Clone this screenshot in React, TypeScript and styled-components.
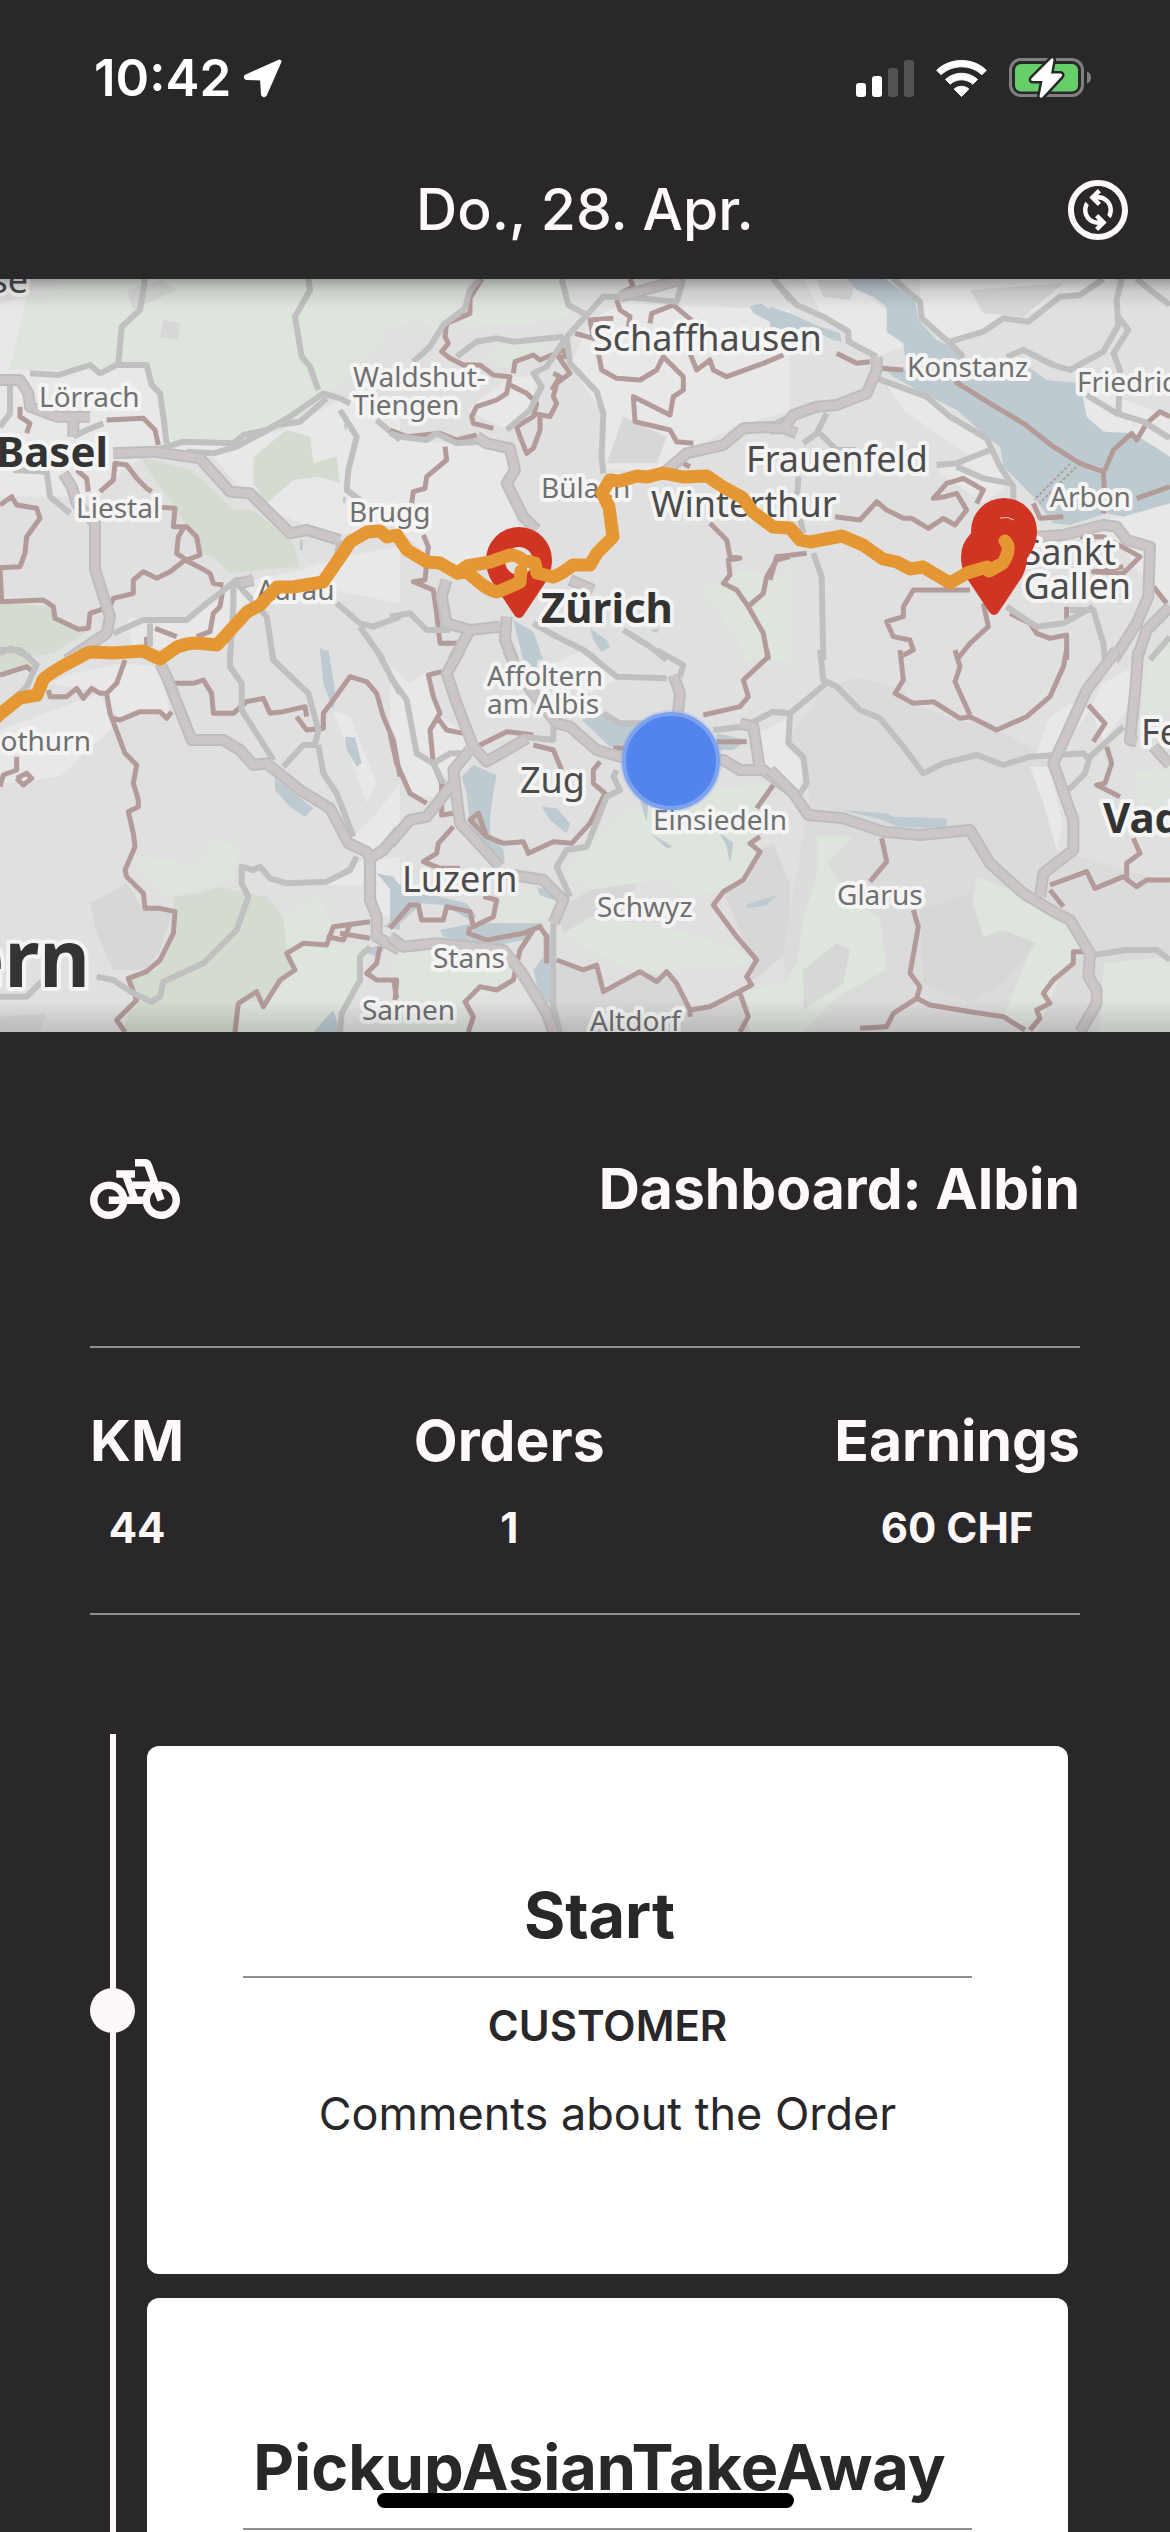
import React from "react";
import styled, { createGlobalStyle } from "styled-components";
import { MdOutlineChangeCircle, MdPedalBike } from "react-icons/md";

const color = {
  ink: "#29272a",
  paper: "#fff8f8",
  card: "#ffffff",
  rule: "#8f8f90",
  route: "#e49733",
  pin: "#d03423",
};

const GlobalStyle = createGlobalStyle`
  * { box-sizing: border-box; }
  body {
    margin: 0;
    background: ${color.ink};
    color: ${color.paper};
    font-family: Inter, Roboto, "Liberation Sans", sans-serif;
  }
  h1, h2, h3, p, dl, dt, dd, ol { margin: 0; padding: 0; }
`;

const Shell = styled.div`
  position: relative;
  display: flex;
  flex-direction: column;
  height: 100vh;
  overflow: hidden;
`;

const StatusBar = styled.div`
  display: flex;
  flex: none;
  align-items: center;
  justify-content: space-between;
  height: 141px;
  padding: 14px 78px 0 94px;
  color: #ffffff;
`;

const Clock = styled.div`
  display: flex;
  align-items: center;
  gap: 12px;
  font-size: 51px;
  line-height: 60px;
  font-weight: 600;
`;

const StatusIcons = styled.div`
  display: flex;
  align-items: center;
  gap: 22px;
`;

const Glyph = styled.svg`
  display: block;
  flex: none;
`;

const Header = styled.header`
  display: grid;
  flex: none;
  grid-template-columns: 72px 1fr 72px;
  align-items: center;
  height: 138px;
  padding: 0 36px;
`;

const PageTitle = styled.h1`
  grid-column: 2;
  text-align: center;
  font-size: 57px;
  line-height: 72px;
  font-weight: 500;
`;

const IconButton = styled.button`
  display: block;
  padding: 0;
  border: 0;
  background: none;
  color: ${color.paper};
  font-size: 72px;
  line-height: 0;
`;

const Scroll = styled.main`
  flex: 1;
  min-height: 0;
  overflow-y: auto;
  scrollbar-width: none;
`;

const MapFrame = styled.section`
  width: 100%;
  aspect-ratio: 1170 / 753;
  overflow: hidden;
`;

const MapDrawing = styled.svg`
  display: block;
  width: 100%;
  height: 100%;
`;

const Content = styled.div`
  padding: 0 90px;
`;

const DashboardHead = styled.div`
  display: flex;
  align-items: center;
  justify-content: space-between;
  height: 316px;
  border-bottom: 2px solid ${color.rule};
  font-size: 90px;
  line-height: 0;
`;

const DashboardTitle = styled.h2`
  font-size: 57px;
  line-height: 78px;
  font-weight: 700;
`;

const Stats = styled.dl`
  display: flex;
  justify-content: space-between;
  padding: 54px 0 55px;
  border-bottom: 2px solid ${color.rule};
  text-align: center;
`;

const StatName = styled.dt`
  font-size: 57px;
  line-height: 78px;
  font-weight: 700;
`;

const StatValue = styled.dd`
  margin-top: 18px;
  font-size: 42px;
  line-height: 60px;
  font-weight: 700;
`;

const Timeline = styled.ol`
  margin-top: 119px;
  list-style: none;
`;

const Stop = styled.li`
  display: grid;
  grid-template-columns: 45px 1fr;
  column-gap: 12px;
`;

const Track = styled.div`
  display: flex;
  align-items: center;
  justify-content: center;
  background: linear-gradient(${color.paper}, ${color.paper}) center / 6px 100% no-repeat;
`;

const Dot = styled.span`
  width: 45px;
  height: 45px;
  border-radius: 50%;
  background: ${color.paper};
`;

const Card = styled.article`
  min-height: 528px;
  margin: 12px;
  margin-left: 0;
  padding: 130px 96px;
  border-radius: 12px;
  background: ${color.card};
  color: ${color.ink};
  text-align: center;
`;

const CardTitle = styled.h3`
  padding: 0 16px 22px 0;
  font-size: 63px;
  line-height: 78px;
  font-weight: 700;
  white-space: nowrap;
`;

const CardRole = styled.p`
  padding: 18px 0 28px;
  border-top: 2px solid ${color.rule};
  font-size: 42px;
  line-height: 60px;
  font-weight: 600;
`;

const CardNote = styled.p`
  font-size: 45px;
  line-height: 60px;
`;

const HomeIndicator = styled.div`
  position: absolute;
  left: 50%;
  bottom: 24px;
  width: 417px;
  height: 15px;
  margin-left: -208px;
  border-radius: 8px;
  background: #000000;
`;

/* ---------- Map ---------- */

type Tile = {
  x: number;
  y: number;
  base?: string;
  light: string;
  meadow: string;
  forest: string;
  dark: string;
  water: string;
  border: string;
  road: string;
  motorway: string;
};

/* Each tile is drawn at three units per map pixel. */
const tiles: Tile[] = [
  {
    x: 0,
    y: 270,
    light:
      "M0 100 80 80 30 300 440 290 520 520 720 510 850 480 1040 380 1200 450V760L1000 800 760 700 640 560 500 570 430 560 370 600 300 680 0 680Z M380 1040 560 1060 710 940 900 900 1020 860 1200 830V1000L1000 960 740 1000 640 1110 400 1150Z",
    meadow: "M130 100 200 27H1200V100L1130 240 990 360 930 420 790 470 700 510 520 510 490 440 480 370 440 285 340 290 180 300 30 300 60 200 80 80Z",
    forest:
      "M420 560 500 580 570 600 640 660 700 720 760 720 880 820 900 890 780 900 690 910 640 860 600 850 520 700 470 640Z M760 560 860 480 930 500 940 580 1010 560 1020 640 960 620 880 630 800 700 760 640Z M0 1000 150 1010 180 1060 260 1085 220 1110 160 1150 0 1170Z",
    dark: "M490 150 540 160 535 210 480 200Z M380 60 480 30 530 60 400 120Z",
    water: "M960 1130 990 1160 990 1170 965 1170Z M900 810 908 810 908 840 900 840Z M1030 680 1038 680 1036 700 1028 700Z M1030 460 1042 470 1036 482Z",
    border:
      "M0 705 35 680 50 705 110 715 120 745 80 800 75 850 60 890 0 893 5 995 130 990 160 1010 165 1045 235 1078 265 1075 270 1030 330 1010 340 985 400 970 400 930 430 905 470 925 510 905 555 870 595 890 630 910 640 940 670 945 M480 712 525 715 520 770 560 770 590 800 600 855 560 870 530 850 535 800 550 775 M230 600 260 625 265 665 M300 665 340 630 345 580 380 585 410 625 440 655 455 665 M320 450 430 445 465 480 475 525 M670 950 660 1010 640 1030 630 1085 590 1100 M465 1075 530 1100 M440 1130 440 1100 M60 410 60 440 90 460 80 490",
    road: "M435 27 420 120 365 170 355 285 M0 470 30 430 30 340 M90 310 175 315 270 285 300 310 350 285 440 285 455 345 480 370 490 440 500 520 M925 27 930 60 885 140 905 260 930 290 955 360 M470 540 550 515 700 520 730 495 800 480 870 440 970 370 1020 385 1050 400 M560 545 640 550 710 530 830 465 900 455 980 385 M1020 420 1070 500 1045 600 1040 660 1080 690 M40 600 140 605 150 680 210 730 M340 1090 430 1050 560 1050 620 1000 710 930 760 930 M700 940 700 1010 690 1170 M710 940 800 1040 820 1170 M450 1060 450 1130 M1010 1000 1080 1060 1120 1070 1200 1040 M1080 1070 1150 1170 M1020 810 1010 860 M0 1150 30 1135 90 1160 M1130 450 1200 510 M220 500 260 480 310 460",
    motorway:
      "M0 330 60 330 85 370 90 410 170 440 220 440 220 500 M220 440 270 440 M340 550 460 545 600 565 690 665 750 670 870 790 920 780 1020 810 M190 610 215 650 230 700 285 760 285 900 330 1040 320 1090 200 1170 M720 940 760 930",
  },
  {
    x: 390,
    y: 270,
    light:
      "M600 150 700 100 1200 120V420L1040 470 890 540 820 600 640 600 640 430 540 290Z M0 500 350 540 380 760 440 800 170 900 0 760Z M230 420 360 320 440 320 420 420 350 480Z",
    meadow:
      "M0 27H230L225 70 190 130 160 190 90 150 0 180Z M240 27H510L540 110 570 130 420 160 200 170 250 100Z M280 250 370 210 480 210 440 260 370 290 320 290Z M930 960 1060 900 1140 920 1200 900V1170H1060L1050 1110Z",
    forest: "",
    dark: "M700 440 830 500 800 580 650 580Z",
    water: "M1080 110 1110 100 1200 150V185L1090 130Z M370 1050 430 1085 460 1170H400Z M600 1075 650 1110 660 1130 635 1145 610 1110Z M780 1080 810 1075 800 1090Z",
    border:
      "M275 27 240 85 240 130 170 160 165 200 175 220 155 245 180 265 220 285 270 285 310 315 360 320 350 370 320 390 260 410 245 440 250 460 310 475 M370 310 375 275 430 255 450 270 520 240 530 260 505 260 540 310 500 340 490 380 500 400 480 440 430 430 M490 310 510 320 485 360 M360 345 410 370 440 400 430 440 380 470 390 500 410 550 430 535 450 480 450 440 M0 480 50 500 150 490 200 510 260 495 M165 530 170 570 110 620 105 655 70 665 65 700 M100 795 115 830 105 930 70 935 130 960 140 1030 150 1120 200 1120 M555 190 610 205 600 150 670 145 M625 250 635 300 680 325 750 330 800 300 820 260 880 320 880 360 850 380 840 435 740 385 730 380 735 455 840 480 860 515 910 520 M680 90 690 120 720 140 715 170 M720 27 730 50 700 65 M780 160 785 130 850 105 880 130 910 155 M900 250 920 300 960 270 970 300 1010 320 1120 280 1180 255 M960 760 1010 810 1020 860 1050 865 1015 870 1020 915 1000 940 1040 960 1075 1010 1120 1090 1135 1170 M1080 1005 1120 970 1130 920 1160 870 1200 860 M880 580 900 590",
    road: "M270 27 240 60 225 115 160 165 120 230 70 275 M200 260 260 215 320 205 370 215 520 200 M515 27 535 105 590 135 530 200 M590 135 640 80 700 80 860 95 880 27 M530 200 540 280 620 365 640 430 635 560 640 610 M530 200 470 290 430 310 455 350 420 420 350 480 M0 490 30 500 110 510 140 490 200 520 260 515 M0 1040 60 1030 110 1080 180 1080 M430 1060 500 1100 580 1140 620 1170 M700 1080 780 1130 830 1170 M1150 27 1200 90",
    motorway:
      "M260 500 290 520 360 535 375 600 350 640 400 740 440 780 M170 930 155 980 170 1060 240 1080 330 1070 M240 1080 190 1170 M350 1040 345 1110 370 1170 M820 610 890 550 1000 525 1060 475 1160 470 1200 450 M540 930 610 960 M690 80 780 55 870 30",
  },
  {
    x: 770,
    y: 270,
    light:
      "M100 27H240L310 90 350 120 400 230 320 260 160 140Z M450 27H1040L870 90 700 160 560 220 450 150Z M340 330 480 390 650 510 720 640 640 700 500 600 600 560 400 420Z M930 340 1200 440V560L1000 480 940 440Z M900 780 1200 700V1000L1100 900 1060 830Z",
    meadow: "M0 960 30 1000 50 1170H0Z M1150 1140 1200 1100V1170H1140Z",
    forest: "",
    dark: "M140 30H260L240 90 160 80Z M600 60 880 40 760 140 640 130Z",
    water:
      "M230 27H345L435 90 445 150 500 210 550 235 590 265 760 280 830 330 930 340 950 440 1000 485 1090 490 1200 560V700L1060 740 1010 730 900 765 850 760 790 680 740 630 700 590 690 530 650 500 560 420 480 380 370 320 330 285 410 300 400 220 350 185 350 110 310 80 260 60Z M0 110 60 130 150 170 210 190 215 215 190 210 130 180 0 175Z",
    border:
      "M200 250 260 280 300 275 M330 295 400 300 M555 335 660 400 760 460 850 530 930 580 1000 605 1005 690 1000 730 M1100 685 1200 650 M1005 600 1030 540 1085 490 1100 510 1130 460 1170 425 1200 440 M195 740 270 750 320 695 350 720 400 745 425 745 475 775 520 745 555 765 590 720 560 670 525 680 490 685 530 640 580 625 640 660 620 700 M790 700 810 745 880 740 M600 960 460 960 430 960 400 1010 400 1040 350 1055 370 1100 420 1110 430 1140 390 1160 M640 1000 655 1070 600 1120 560 1170 M720 1030 780 1060 800 1090 840 1105 890 1095 890 1170 M890 1010 890 1060 M0 930 20 860 110 850 M930 800 1000 800 1110 860 1060 910 970 905 1060 890 M1150 950 1190 1000",
    road: "M10 27 80 105 160 140 235 185 235 215 320 260 M370 27 450 95 455 145 540 220 580 260 M540 215 640 185 700 145 775 155 870 80 930 75 1000 27 M710 260 760 240 850 285 900 300 1000 245 1045 165 1040 90 1055 27 M1045 140 1075 180 1030 250 1050 300 1045 440 M950 375 1040 430 1120 455 1200 505 M320 325 470 380 540 440 650 505 690 590 730 650 730 690 M500 585 560 580 660 540 M560 590 640 625 720 640 M85 620 80 700 100 790 M130 850 155 920 160 1170 M170 430 140 490 100 520 M150 490 200 540 260 540 M900 1020 970 1020 1000 1120 1005 1170 M970 1010 880 1060 800 1070 710 1010 M1100 27 1140 60 1200 105 M1200 1100 1140 1170",
    motorway:
      "M0 475 40 475 70 435 140 410 200 405 290 370 320 300 320 260 M40 475 80 490 M800 800 880 795 1000 765 1040 770 1070 810 1140 830 1135 980 1100 1060 1030 1170 M1200 1010 1130 1080 1100 1170",
  },
  {
    x: 0,
    y: 650,
    light:
      "M150 100 220 70 370 40 480 50 510 190 350 200 320 130Z M0 240 300 130 340 230 180 380 0 400Z M1120 500 1200 400V540L1120 610 1060 560Z M1130 630 1200 620V800H1130Z M1000 180 1050 200 1130 400 1100 460Z M1000 690 1090 630V705H900Z",
    meadow: "M390 620 460 700 500 740 600 720 700 690 720 600 640 560 600 640Z M880 890 1110 880 1080 1000 1030 1080 1020 1146H710L720 1050 800 1060 870 960Z M850 790 960 740 1000 830 920 880 860 890Z",
    forest: "M520 740 600 730 660 710 740 730 800 740 850 800 860 900 880 960 800 1060 720 1050 710 1146H370L400 1040 380 990 470 960 520 840Z M0 0 80 0 100 50 0 70Z",
    dark: "M270 760 380 700 430 780 520 780 480 900 440 960 340 960 290 850Z M0 1100 140 1090 120 1146H0Z",
    water:
      "M960 0H985L1005 120 1000 180 970 100Z M1035 260 1065 262 1085 340 1070 350 1040 300Z M825 385 940 475 915 500 870 470 825 420Z M1130 670 1180 680 1200 710V840L1150 830 1190 800 1190 740Z M1080 900 1170 880 1130 920Z M940 1146 1000 1080 1020 1146Z",
    border:
      "M0 75 80 50 100 65 M145 120 150 140 200 140 230 115 250 145 275 115 300 130 320 130 350 100 375 30 M320 130 330 190 375 310 410 345 400 400 415 450 415 470 385 485 400 550 405 590 375 660 380 680 430 730 435 775 480 775 525 785 520 850 480 930 440 965 385 985 410 1050 350 1110 375 1146 M340 205 360 210 420 185 480 185 500 205 515 185 M525 100 580 100 610 90 635 130 640 190 700 190 740 155 790 145 810 190 850 185 915 170 920 200 M890 200 920 240 970 235 970 190 1000 150 1050 80 1100 95 1130 130 1150 200 1180 270 1200 380 M0 410 10 375 50 360 50 320 M50 385 80 370 95 385 70 405 50 385 M705 1146 715 1060 770 1025 790 1070 840 990 885 960 860 910 910 880 980 885 1000 830 1110 815 M980 860 1030 870 1050 825 M1020 850 1110 865 M1140 890 1130 940 1100 970 1130 990 1190 990 1185 1050",
    road: "M0 0 60 0 110 45 80 110 40 150 M690 0 690 50 725 100 725 180 820 330 M815 0 820 30 925 130 955 240 945 285 910 285 850 350 M955 285 970 370 1010 430 1060 560 M1130 0 1200 130 M1070 620 1050 660 980 695 860 700 810 685 780 650 760 660 725 650 725 700 745 740 710 840 610 940 490 995 480 1040 455 1055 400 1030 340 990 290 980 M0 1040 80 1040 125 995 M1110 890 1080 920 1080 990 1025 1090 1020 1146",
    motorway:
      "M480 40 500 80 575 270 670 270 720 300 760 345 800 340 900 420 990 475 1045 580 1100 605 1110 625 1110 750 1130 800 1130 860 1200 900 M1110 625 1150 600 1200 540",
  },
  {
    x: 390,
    y: 650,
    light: "M0 50 60 100 120 60 150 200 240 260 130 440 60 440 0 250Z M1110 250 1200 200V400L1120 350Z M450 60 580 0 680 90 600 130Z",
    meadow:
      "M590 600 700 480 780 480 980 420 1130 400 1140 480 1100 520 1110 600 1070 700 1000 720 900 740 840 690 740 700 600 720 520 660Z M350 700 500 730 480 800 340 840 320 760Z M0 900 130 890 360 920 370 1000 220 1060 240 1146H0Z M520 850 620 800 900 850 1050 900 1090 930 980 960 850 960 800 990 640 920Z M1060 1020 1200 1000V1146H1080Z",
    forest: "",
    dark: "M1000 720 1070 700 1110 600 1150 580 1200 700V900L1080 1000 1090 930 1050 850Z M500 940 620 950 640 1030 750 970 850 980 900 1080 1050 1030 1080 1146H500Z M500 780 600 720 740 700 700 780 600 800 520 850Z",
    water:
      "M215 380 250 345 320 375 310 430 300 500 300 550 340 600 345 640 290 590 240 530 230 430Z M455 470 500 475 540 520 530 550 480 510Z M400 0H445L440 60 405 30Z M575 210 640 190 740 230 720 290 660 290Z M0 680 50 720 150 740 230 760 260 800 240 810 160 765 95 760 20 830 0 840Z M150 840 250 820 460 820 400 870 300 890 160 860Z M460 850 480 850 490 1000 490 1070 450 1040 430 960 460 920Z M750 450 775 460 770 515Z M780 550 850 590 830 595Z M990 550 1030 580 1020 640 1010 590Z M1065 765 1160 735 1130 765 1080 775Z M440 710 500 730 490 750 450 735Z M980 250 1070 270 1030 300 980 300Z",
    border:
      "M155 65 115 75 130 140 150 190 120 240 130 340 155 400 155 495 190 490 M140 200 170 240 220 250 M0 250 20 340 60 430 110 460 M260 290 350 245 430 255 M430 285 490 300 515 360 M630 335 610 360 610 400 645 430 620 480 600 520 545 580 490 575 415 610 400 575 340 580 290 560 265 490 240 510 290 560 M190 530 145 580 140 610 100 635 150 655 210 655 M280 740 320 750 310 800 250 830 240 785 170 770 160 810 95 810 85 765 60 765 0 835 M240 830 235 850 290 870 400 850 450 830 470 860 470 940 M430 840 390 900 370 990 320 1020 270 1010 225 1055 250 1100 235 1146 M500 930 580 960 620 945 640 1025 750 965 800 995 830 965 860 1000 900 1080 960 1070 1085 1005 1070 980 1100 930 1040 860 970 765 1000 725 1060 690 1110 605 1080 580 1110 560 M1100 475 1150 405 M1130 0 1135 20 1060 90 1075 140 1050 170 940 195 M980 275 1070 275 M670 295 720 295 M1050 1030 1075 1100 1050 1146 M900 1100 900 1080 M10 985 20 1045",
    road: "M0 80 50 150 80 310 130 340 180 310 240 310 M580 0 680 80 830 85 M800 0 880 45 870 80 M640 190 690 220 830 220 M970 240 1060 230 1150 185 1200 190 M680 360 670 380 690 420 650 440 590 590 530 600 500 650 540 740 M490 820 490 1070 510 1146 M400 260 490 270 490 230 M130 340 160 400",
    motorway:
      "M210 0 170 70 200 160 250 290 290 335 410 265 M240 300 190 360 210 520 330 650 M190 400 110 500 60 510 0 580 M0 860 40 890 140 880 340 900 390 960 470 1090 490 1146 M355 0 380 60 430 130 500 220 540 230 620 300 690 320 830 330 1000 330 1050 360 1120 360 1200 420 M850 75 870 130 860 220 M1050 220 1090 230 1110 360 M340 670 460 690 520 750 490 820",
  },
  {
    x: 770,
    y: 650,
    base: "M260 80 400 120 420 160 560 210 680 240 840 320 860 600 1200 700V1146H60L40 900 100 560 120 440 60 260 160 120Z",
    light: "M0 230 60 300 100 340 90 420 0 360Z M800 310 840 200 900 160 960 180 850 330Z M1000 100 1090 50 1070 180 1000 270 960 180Z M780 350H840L860 450 880 520 860 600 820 460Z",
    meadow:
      "M140 560 250 560 170 640 250 760 330 800 350 960 200 1040 100 1146H0L20 1040 80 940 100 800 140 680Z M620 680 720 720 800 760 920 850 940 900 880 960 800 1146 700 1100 790 880 640 860 600 800Z M1100 370 1200 350V460H1100Z M1000 940 1200 920V1146H990Z M1140 0H1200V180L1110 230Z",
    forest: "",
    dark: "M450 780 600 730 640 860 700 840 800 880 700 1000 600 1060 460 1000Z M100 960 200 880 240 900 220 1000 100 1080Z",
    water: "M215 480 350 490 370 500 530 505V535L380 530 340 510Z",
    border:
      "M390 0 400 90 375 130 430 160 490 155 570 205 600 200 680 240 770 200 840 140 880 50 890 0 M555 0 570 50 555 95 600 195 M955 165 1005 220 970 275 M1010 290 1025 340 1005 400 980 405 1050 440 M1090 565 1110 610 1070 640 1070 685 M840 705 950 665 975 715 1060 680 1100 710 1130 690 1200 690 M840 720 880 770 M335 565 350 635 300 695 M430 780 445 830 420 970 450 1010 440 1045 370 1090 350 1130 270 1135 M440 1045 480 1065 600 1085 700 1100 765 1140 M780 1140 810 1105 800 1080 840 1060 820 1030 850 990 910 940 910 905 950 905",
    road: "M150 0 160 90 200 110 270 180 330 205 400 290 460 370 520 340 620 315 700 345 780 320 940 310 960 330 M175 95 60 190 0 185 M60 190 55 280 100 320 110 400 90 430 M1060 230 960 320 945 370 900 415 870 410 M970 915 1070 900 1160 900 1200 930",
    motorway:
      "M0 360 70 430 115 495 220 505 340 545 450 555 600 540 660 640 760 730 860 790 900 810 960 910 955 980 980 1020 980 1060 930 1146 M1040 0 950 120 850 340 910 510 910 600 820 670 810 740 M1105 0 1095 130 1080 270 1100 275 M1150 290 1200 345",
  },
];

type Rank = "town" | "city" | "major" | "capital";

const ranks: Record<Rank, { size: number; weight: number; fill: string }> = {
  town: { size: 28, weight: 400, fill: "#707070" },
  city: { size: 36, weight: 400, fill: "#4c4c4c" },
  major: { size: 42, weight: 700, fill: "#333333" },
  capital: { size: 78, weight: 700, fill: "#333333" },
};

const places: [string, number, number, Rank, ("end" | "start")?][] = [
  ["se", 28, 293, "city", "end"],
  ["Lörrach", 39, 407, "town"],
  ["Basel", 108, 467, "major", "end"],
  ["Liestal", 76, 518, "town"],
  ["Waldshut-", 353, 387, "town"],
  ["Tiengen", 353, 415, "town"],
  ["Brugg", 349, 522, "town"],
  ["Aarau", 257, 600, "town"],
  ["Schaffhausen", 593, 351, "city"],
  ["Bülach", 541, 498, "town"],
  ["Winterthur", 651, 517, "city"],
  ["Frauenfeld", 746, 472, "city"],
  ["Zürich", 541, 623, "major"],
  ["Konstanz", 907, 377, "town"],
  ["Friedric", 1077, 392, "town"],
  ["Arbon", 1050, 507, "town"],
  ["Sankt", 1116, 565, "city", "end"],
  ["Gallen", 1131, 599, "city", "end"],
  ["othurn", 91, 751, "town", "end"],
  ["ern", 90, 987, "capital", "end"],
  ["Affoltern", 487, 686, "town"],
  ["am Albis", 487, 714, "town"],
  ["Zug", 520, 793, "city"],
  ["Luzern", 402, 892, "city"],
  ["Schwyz", 597, 917, "town"],
  ["Stans", 433, 968, "town"],
  ["Sarnen", 362, 1020, "town"],
  ["Altdorf", 590, 1031, "town"],
  ["Einsiedeln", 653, 830, "town"],
  ["Glarus", 837, 905, "town"],
  ["Fe", 1141, 745, "city"],
  ["Vad", 1103, 833, "major"],
];

const pinShape = "M0-34a33 33 0 0 0-33 33c0 9 3 17 7 23L-4 55q4 4 8 0L26 22c4-6 7-14 7-23A33 33 0 0 0 0-34z";
const pinHole = "M0-14a14 14 0 0 1 0 28a14 14 0 0 1 0-28z";

function RouteMap() {
  const at = (t: Tile) => `translate(${t.x} ${t.y}) scale(${1 / 3})`;
  return (
    <MapDrawing viewBox="0 279 1170 753" preserveAspectRatio="xMidYMid slice" role="img" aria-label="Route">
      <defs>
        <linearGradient id="edge-top" x1="0" y1="0" x2="0" y2="1">
          <stop offset="0" stopColor="#000" stopOpacity="0.3" />
          <stop offset="0.4" stopColor="#000" stopOpacity="0.1" />
          <stop offset="1" stopColor="#000" stopOpacity="0" />
        </linearGradient>
        <linearGradient id="edge-bottom" x1="0" y1="0" x2="0" y2="1">
          <stop offset="0" stopColor="#000" stopOpacity="0" />
          <stop offset="1" stopColor="#000" stopOpacity="0.14" />
        </linearGradient>
      </defs>
      <rect x="0" y="279" width="1170" height="753" fill="#e0e0e0" />
      {tiles.map((t) => (
        <g key={`land-${t.x}-${t.y}`} transform={at(t)}>
          {t.base && <path d={t.base} fill="#dbdbdb" />}
          <path d={t.light} fill="#e8e8e8" />
          <path d={t.meadow} fill="#dee5dd" />
          <path d={t.forest} fill="#d4dccf" />
          <path d={t.dark} fill="#d7d7d7" />
          <path d={t.water} fill="#bdcad0" />
        </g>
      ))}
      {tiles.map((t) => (
        <g key={`ways-${t.x}-${t.y}`} transform={at(t)} fill="none" strokeLinejoin="round">
          <path d={t.border} stroke="#b39b9a" strokeWidth="15" />
          <path d={t.road} stroke="#c0c0c0" strokeWidth="18" />
          <path d={t.motorway} stroke="#bebdbd" strokeWidth="36" />
          <path d={t.motorway} stroke="#cdc6c6" strokeWidth="24" />
        </g>
      ))}
      <path d="M1070 464 1034 500M1076 467 1040 503" stroke="#b39b9a" strokeWidth="2" strokeDasharray="3 2" />
      <g fontFamily='"Noto Sans", "Open Sans", sans-serif' stroke="#f4f4f4" strokeWidth="8" strokeLinejoin="round" paintOrder="stroke">
        {places.map(([name, x, y, rank, anchor]) => (
          <text
            key={name}
            x={x}
            y={y}
            textAnchor={anchor ?? "start"}
            fontSize={ranks[rank].size}
            fontWeight={ranks[rank].weight}
            fill={ranks[rank].fill}
          >
            {name}
          </text>
        ))}
      </g>
      <g fill={color.pin} fillRule="evenodd">
        <path transform="translate(519 561)" d={pinShape + pinHole} />
        <path transform="translate(1004 532)" d={pinShape} />
        <path transform="translate(994 558)" d={pinShape} />
      </g>
      <path d="M1000 518q8-2 14 2" fill="none" stroke="#e6d0cc" strokeWidth="1" />
      <g fill="none" stroke={color.route} strokeWidth="13" strokeLinejoin="round" strokeLinecap="round">
        <path d="M-4 718 0 714 20 698 37 695 43 680Q47 674 80 657 87 652 93 652L113 653 143 651 160 659 177 647Q187 643 197 643L217 645 247 612 260 605 277 587 293 587 323 582 343 553 350 542 367 532 380 531 387 537 397 535 407 550 427 562 440 563 457 573 467 572 480 583Q489 590 497 592L507 588 520 582 521 571" />
        <path d="M457 573 467 566 490 562 510 555Q517 555 523 560L535 563 537 573 553 577Q560 575 573 565L590 565 597 553 613 537 609 507 602 493 610 480 620 481 637 476 647 477 663 473 683 477 707 476 723 487 743 498 753 512 773 527 790 528 800 540 810 542 842 536 863 545 883 559 897 562 910 569 923 567 950 583 967 573 987 567 989 571 1003 563Q1012 548 1005 541" />
      </g>
      <circle cx="671" cy="761" r="51" fill="#7da2ee" opacity="0.25" />
      <circle cx="671" cy="761" r="47" fill="#5384ed" stroke="#7da2ee" strokeWidth="4" />
      <rect x="0" y="279" width="1170" height="30" fill="url(#edge-top)" />
      <rect x="0" y="1000" width="1170" height="32" fill="url(#edge-bottom)" />
    </MapDrawing>
  );
}

/* ---------- Status icons ---------- */

const LocationGlyph = () => (
  <Glyph width="40" height="40" viewBox="0 0 40 40">
    <path d="M36.500 3.500 3 18.500Q2.500 19.500 3.500 20L19 20.500 20 36.500Q21 38 22 36.500Z" fill="#fff" stroke="#fff" strokeWidth="4" strokeLinejoin="round" />
  </Glyph>
);

const SignalGlyph = () => (
  <Glyph width="58" height="40" viewBox="0 0 58 40">
    <rect x="0" y="25" width="10" height="14" rx="3" fill="#fff" />
    <rect x="16" y="18" width="10" height="21" rx="3" fill="#fff" />
    <rect x="32" y="10" width="10" height="29" rx="3" fill="#555355" />
    <rect x="48" y="2" width="10" height="37" rx="3" fill="#555355" />
  </Glyph>
);

const WifiGlyph = () => (
  <Glyph width="51" height="40" viewBox="0 0 51 40">
    <g fill="#fff" stroke="#fff" strokeWidth="1" strokeLinejoin="round">
      <path d="M25.500 2.500C16 2.500 7 6 .7 12.300L5.200 16.800C10.500 11.600 17.700 8.800 25.500 8.800S40.500 11.600 45.800 16.800L50.300 12.300C44 6 35 2.500 25.500 2.500Z" />
      <path d="M25.500 15.300C19.500 15.300 13.800 17.600 9.500 21.500L14.200 26.200C17.300 23.400 21.200 21.800 25.500 21.800S33.700 23.400 36.800 26.200L41.500 21.500C37.200 17.600 31.500 15.300 25.500 15.300Z" />
      <path d="M25.500 28.300C22.700 28.300 20.200 29.300 18.200 31L25.500 38.500 32.800 31C30.800 29.300 28.300 28.300 25.500 28.300Z" />
    </g>
  </Glyph>
);

const BatteryGlyph = () => (
  <Glyph width="83" height="42" viewBox="0 0 83 42">
    <rect x="1.500" y="2.500" width="72" height="36" rx="10.500" fill="none" stroke="#807f82" strokeWidth="3" />
    <path d="M78 14.500Q82 16 82 20.500T78 26.500Z" fill="#807f82" />
    <rect x="6" y="7" width="63" height="27.500" rx="6" fill="#66cf68" />
    <path
      d="M42.500 1.500 22.500 21.500Q21.500 24 24 24H33.500L30.500 39.500Q32 42 34 39.500L52.500 19.500Q54 17 51.500 16.500H42L44.500 3Q44.500 0.500 42.500 1.500Z"
      fill="#fff"
      stroke={color.ink}
      strokeWidth="5"
      strokeLinejoin="round"
      paintOrder="stroke"
    />
  </Glyph>
);

/* ---------- Page ---------- */

const stats = [
  { name: "KM", value: "44" },
  { name: "Orders", value: "1" },
  { name: "Earnings", value: "60 CHF" },
];

const stops = [
  { title: "Start", role: "CUSTOMER", note: "Comments about the Order" },
  { title: "PickupAsianTakeAway" },
];

export default function App() {
  return (
    <Shell>
      <GlobalStyle />
      <StatusBar>
        <Clock>
          10:42
          <LocationGlyph />
        </Clock>
        <StatusIcons>
          <SignalGlyph />
          <WifiGlyph />
          <BatteryGlyph />
        </StatusIcons>
      </StatusBar>
      <Header>
        <PageTitle>Do., 28. Apr.</PageTitle>
        <IconButton type="button" aria-label="Refresh">
          <MdOutlineChangeCircle />
        </IconButton>
      </Header>
      <Scroll>
        <MapFrame>
          <RouteMap />
        </MapFrame>
        <Content>
          <DashboardHead>
            <MdPedalBike />
            <DashboardTitle>Dashboard: Albin</DashboardTitle>
          </DashboardHead>
          <Stats>
            {stats.map((s) => (
              <div key={s.name}>
                <StatName>{s.name}</StatName>
                <StatValue>{s.value}</StatValue>
              </div>
            ))}
          </Stats>
          <Timeline>
            {stops.map((s) => (
              <Stop key={s.title}>
                <Track>
                  <Dot />
                </Track>
                <Card>
                  <CardTitle>{s.title}</CardTitle>
                  <CardRole>{s.role}</CardRole>
                  {s.note && <CardNote>{s.note}</CardNote>}
                </Card>
              </Stop>
            ))}
          </Timeline>
        </Content>
      </Scroll>
      <HomeIndicator />
    </Shell>
  );
}
